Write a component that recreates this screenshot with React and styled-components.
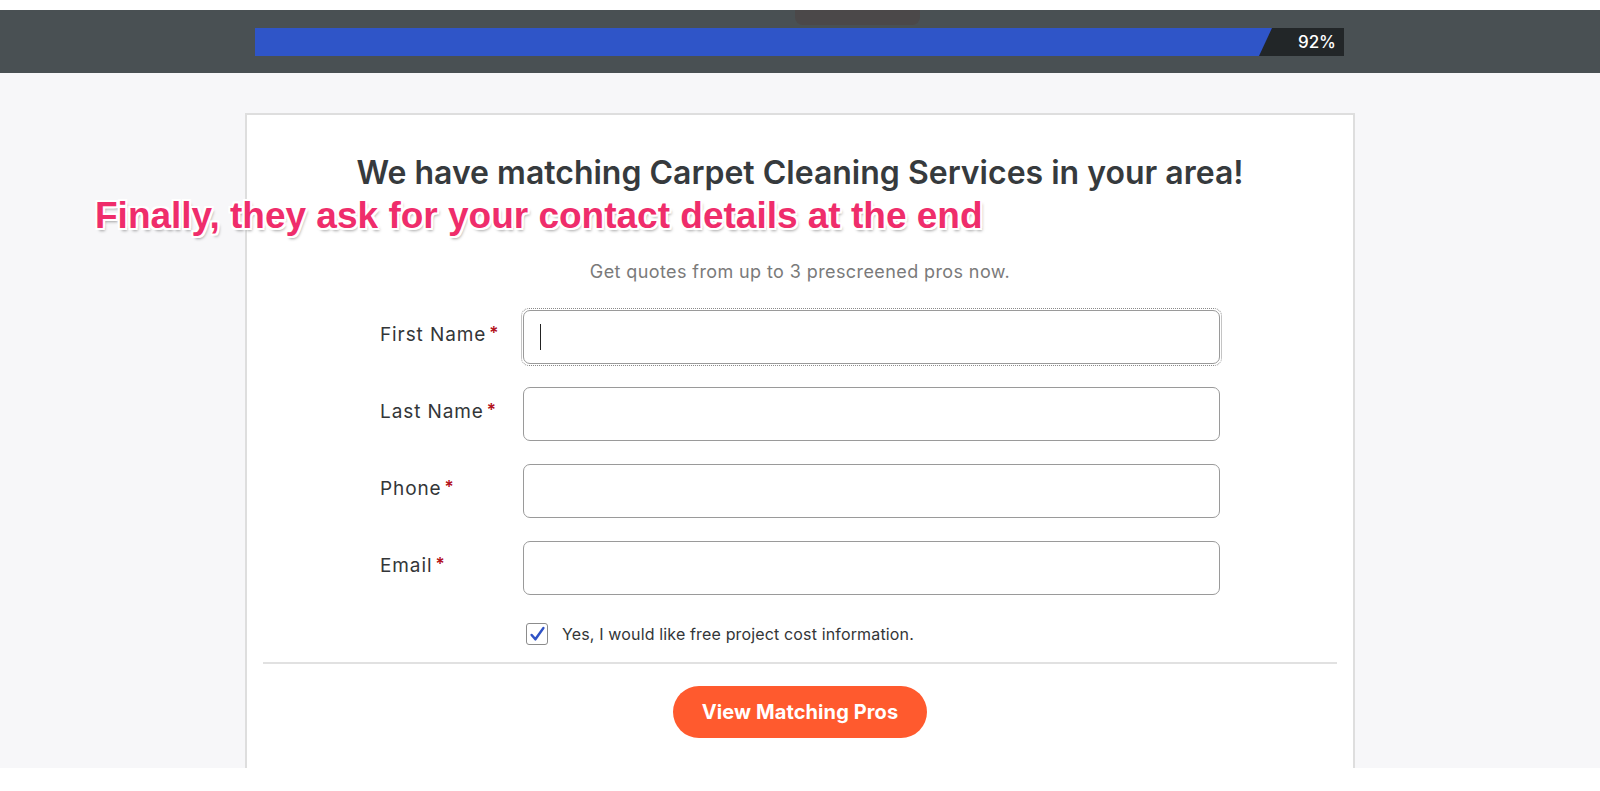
import React from 'react';
import styled, { createGlobalStyle } from 'styled-components';

const GlobalStyle = createGlobalStyle`
    html, body {
        margin: 0;
        padding: 0;
        background: #ffffff;
    }
    * {
        box-sizing: border-box;
    }
`;

const FONT = `Inter, "Noto Sans", sans-serif`;

const Frame = styled.div`
    position: relative;
    margin-top: 10px;
    height: 758px;
    overflow: hidden;
    background-color: #f7f7f9;
    font-family: ${FONT};
`;

const TopBar = styled.div`
    position: relative;
    height: 63px;
    background-color: #495053;
    padding: 18px 0 0 255px;
`;

const LogoShadow = styled.div`
    position: absolute;
    left: 795px;
    top: 0;
    width: 125px;
    height: 15px;
    background-color: #4b4849;
    border-radius: 0 0 8px 8px;
`;

const Track = styled.div`
    position: relative;
    width: 1089px;
    height: 28px;
    background-color: #222628;
    display: flex;
    align-items: center;
    justify-content: flex-end;
    padding-right: 8px;
`;

const Fill = styled.div`
    position: absolute;
    left: 0;
    top: 0;
    height: 100%;
    background-color: #2f55c8;
    clip-path: polygon(0 0, 100% 0, calc(100% - 13px) 100%, 0 100%);
`;

const Percent = styled.span`
    position: relative;
    color: #ffffff;
    font-size: 17px;
    font-weight: 500;
`;

const Card = styled.div`
    width: 1110px;
    margin: 40px 0 0 245px;
    height: 700px;
    background-color: #ffffff;
    border: 2px solid #dedede;
    border-bottom: none;
    padding: 15px 16px 0;
    display: flex;
    flex-direction: column;
    align-items: center;
`;

const Title = styled.h1`
    margin: 23px 0 0;
    font-size: 32px;
    font-weight: 600;
    color: #363a3d;
    line-height: 40px;
`;

const Subtitle = styled.p`
    margin: 68px 0 0;
    font-size: 18px;
    letter-spacing: 0.4px;
    color: #7a7a7a;
    line-height: 22px;
`;

const Form = styled.div`
    width: 840px;
    margin-top: 27px;
    display: flex;
    flex-direction: column;
    gap: 23px;
`;

const Row = styled.div`
    display: grid;
    grid-template-columns: 143px 697px;
    align-items: center;
`;

const Label = styled.label`
    font-size: 19px;
    letter-spacing: 0.9px;
    color: #333638;
    margin-top: -6px;
    display: flex;
    align-items: flex-start;
    gap: 3px;
`;

const Star = styled.span`
    color: #b3121c;
    font-size: 17px;
    font-weight: 600;
`;

const Field = styled.div`
    position: relative;
    outline: ${(p) => (p.focused ? '1px dotted #8a8a8a' : 'none')};
    outline-offset: 1px;
    border-radius: 6px;
`;

const Input = styled.input`
    display: block;
    width: 100%;
    height: 54px;
    border: 1px solid #9a9a9a;
    border-radius: 7px;
    background: #ffffff;
    font-family: ${FONT};
    font-size: 17px;
    padding: 0 16px;
    outline: none;
`;

const Caret = styled.span`
    position: absolute;
    left: 17px;
    top: 14px;
    width: 1px;
    height: 26px;
    background-color: #222;
`;

const ConsentRow = styled.div`
    width: 840px;
    margin-top: 28px;
    padding-left: 146px;
    display: flex;
    align-items: center;
    gap: 14px;
    font-size: 16px;
    letter-spacing: 0.15px;
    color: #333638;
`;

const Box = styled.span`
    width: 22px;
    height: 22px;
    flex-shrink: 0;
    border: 1px solid #8c8c8c;
    border-radius: 3px;
    background: #ffffff;
    display: flex;
    align-items: center;
    justify-content: center;
`;

const Divider = styled.hr`
    align-self: stretch;
    margin: 17px 0 0;
    border: none;
    border-top: 2px solid #e1e1e1;
`;

const Cta = styled.button`
    margin-top: 22px;
    width: 254px;
    height: 52px;
    border: none;
    border-radius: 26px;
    background-color: #ff5a2e;
    color: #ffffff;
    font-family: ${FONT};
    font-size: 20px;
    font-weight: 700;
    letter-spacing: 0.1px;
    cursor: pointer;
`;

const Annotation = styled.div`
    position: absolute;
    left: 95px;
    top: 185px;
    font-family: "Liberation Sans", Arial, sans-serif;
    font-weight: 700;
    font-size: 37px;
    color: #ef2d6b;
    text-shadow:
        2px 0 0 #fff, -2px 0 0 #fff, 0 2px 0 #fff, 0 -2px 0 #fff,
        2px 2px 0 #fff, -2px -2px 0 #fff, 2px -2px 0 #fff, -2px 2px 0 #fff,
        2px 3px 3px rgba(0, 0, 0, 0.35);
    white-space: nowrap;
`;

const fields = ['First Name', 'Last Name', 'Phone', 'Email'];

const App = () => (
    <>
        <GlobalStyle />
        <Frame>
            <TopBar>
                <LogoShadow />
                <Track>
                    <Fill style={{ width: `${(1017 / 1089) * 100}%` }} />
                    <Percent>92%</Percent>
                </Track>
            </TopBar>

            <Card>
                <Title>We have matching Carpet Cleaning Services in your area!</Title>
                <Subtitle>Get quotes from up to 3 prescreened pros now.</Subtitle>

                <Form>
                    {fields.map((name, i) => (
                        <Row key={name}>
                            <Label>
                                {name}
                                <Star>*</Star>
                            </Label>
                            <Field focused={i === 0}>
                                <Input type="text" aria-label={name} />
                                {i === 0 && <Caret />}
                            </Field>
                        </Row>
                    ))}
                </Form>

                <ConsentRow>
                    <Box>
                        <svg width="17" height="17" viewBox="0 0 16 16">
                            <path
                                d="M2.5 8.5 L6 12.5 L13.5 2"
                                fill="none"
                                stroke="#3053c6"
                                strokeWidth="2.4"
                                strokeLinecap="round"
                                strokeLinejoin="round"
                            />
                        </svg>
                    </Box>
                    Yes, I would like free project cost information.
                </ConsentRow>

                <Divider />

                <Cta>View Matching Pros</Cta>
            </Card>

            <Annotation>Finally, they ask for your contact details at the end</Annotation>
        </Frame>
    </>
);

export default App;
